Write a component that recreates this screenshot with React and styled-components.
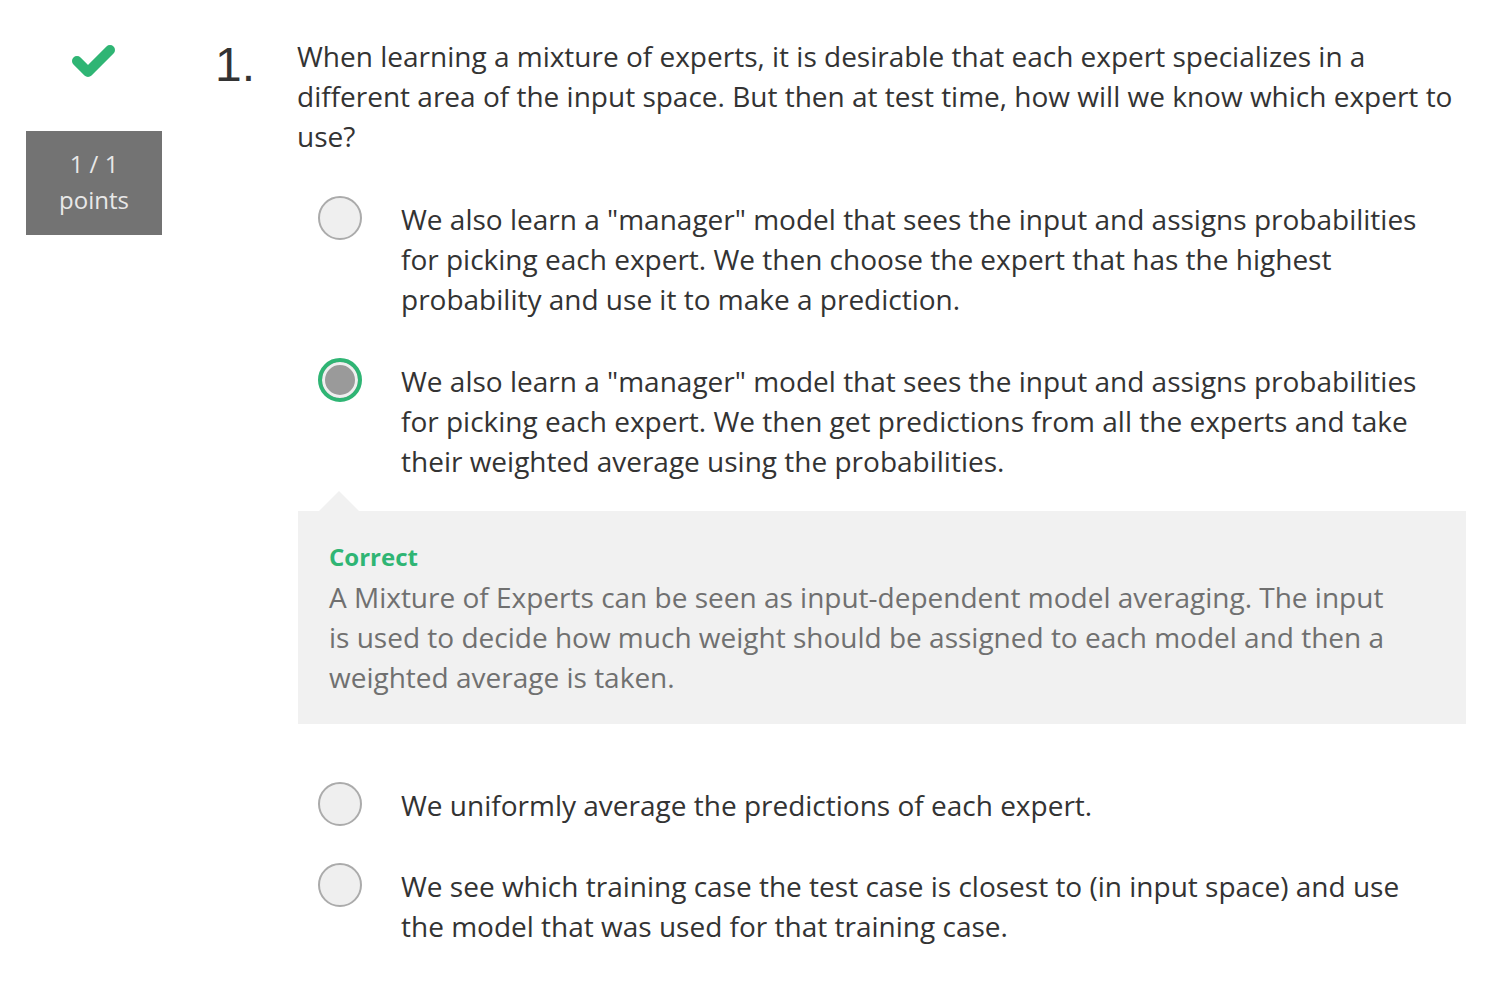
import styled, { createGlobalStyle } from "styled-components"

const GlobalStyle = createGlobalStyle`
  html, body {
    margin: 0;
    padding: 0;
    background: #fff;
  }
  body {
    font-family: "Open Sans", "Noto Sans", sans-serif;
    color: #333;
  }
`

const QuizItem = styled.div`
  display: flex;
  padding-top: 36px;
  width: 1506px;
  box-sizing: border-box;
`

const ScoreCol = styled.div`
  width: 188px;
  padding-left: 26px;
  box-sizing: border-box;
  flex-shrink: 0;
  .check {
    display: block;
    margin: 7px 0 0 45px;
  }
`

const PointsBox = styled.div`
  margin-top: 52px;
  width: 136px;
  height: 104px;
  background: #737373;
  color: #e8e8e8;
  font-size: 24px;
  line-height: 36px;
  text-align: center;
  padding-top: 15px;
  box-sizing: border-box;
`

const Number = styled.div`
  width: 109px;
  flex-shrink: 0;
  padding-left: 27px;
  box-sizing: border-box;
  font-family: "Liberation Sans", Arial, sans-serif;
  font-size: 48px;
  line-height: 56px;
  margin-top: 1px;
  color: #333;
`

const Content = styled.div`
  flex: 1;
  margin-right: 40px;
`

const Prompt = styled.div`
  font-size: 28px;
  line-height: 40px;
  padding-right: 4px;
`

const Options = styled.div`
  margin-top: 43px;
  display: flex;
  flex-direction: column;
`

const OptionRow = styled.div`
  display: flex;
  align-items: flex-start;
  padding-left: 21px;
  margin-top: ${p => p.$gap || 0}px;
`

const Radio = styled.span`
  width: 44px;
  height: 44px;
  flex-shrink: 0;
  margin-top: -3px;
  border-radius: 50%;
  box-sizing: border-box;
  background: ${p => (p.$checked ? "#9a9a9a" : "#efefef")};
  border: ${p => (p.$checked ? "4px solid #2fb574" : "2px solid #ababab")};
  box-shadow: ${p => (p.$checked ? "inset 0 0 0 3px #efefef" : "none")};
`

const OptionText = styled.div`
  margin-left: 39px;
  font-size: 28px;
  line-height: 40px;
  padding-right: 30px;
`

const Feedback = styled.div`
  position: relative;
  margin-top: 30px;
  margin-left: 1px;
  background: #f1f1f1;
  padding: 26px 70px 27px 31px;
  &::before {
    content: "";
    position: absolute;
    top: -20px;
    left: 21px;
    border-left: 20px solid transparent;
    border-right: 20px solid transparent;
    border-bottom: 20px solid #f1f1f1;
  }
`

const FeedbackTitle = styled.div`
  color: #2fb574;
  font-weight: 700;
  font-size: 24px;
  line-height: 40px;
`

const FeedbackText = styled.div`
  color: #707070;
  font-size: 28px;
  line-height: 40px;
`

const CheckIcon = () => (
  <svg className="check" width="46" height="36" viewBox="0 0 46 36">
    <polyline
      points="6,18 17,29 39,7"
      fill="none"
      stroke="#2fb574"
      strokeWidth="10"
      strokeLinecap="round"
      strokeLinejoin="round"
    />
  </svg>
)

const options = [
  {
    text: 'We also learn a "manager" model that sees the input and assigns probabilities for picking each expert. We then choose the expert that has the highest probability and use it to make a prediction.',
  },
  {
    text: 'We also learn a "manager" model that sees the input and assigns probabilities for picking each expert. We then get predictions from all the experts and take their weighted average using the probabilities.',
    checked: true,
  },
  { text: "We uniformly average the predictions of each expert." },
  {
    text: "We see which training case the test case is closest to (in input space) and use the model that was used for that training case.",
  },
]

const gaps = [0, 42, 61, 40]

const App = () => {
  return (
    <>
      <GlobalStyle />
      <QuizItem>
        <ScoreCol>
          <CheckIcon />
          <PointsBox>
            1 / 1
            <br />
            points
          </PointsBox>
        </ScoreCol>
        <Number>1.</Number>
        <Content>
          <Prompt>
            When learning a mixture of experts, it is desirable that each
            expert specializes in a different area of the input space. But then
            at test time, how will we know which expert to use?
          </Prompt>
          <Options>
            {options.map((o, i) => (
              <div key={i}>
                <OptionRow $gap={gaps[i]}>
                  <Radio $checked={o.checked} />
                  <OptionText>{o.text}</OptionText>
                </OptionRow>
                {o.checked && (
                  <Feedback>
                    <FeedbackTitle>Correct</FeedbackTitle>
                    <FeedbackText>
                      A Mixture of Experts can be seen as input-dependent model
                      averaging. The input is used to decide how much weight
                      should be assigned to each model and then a weighted
                      average is taken.
                    </FeedbackText>
                  </Feedback>
                )}
              </div>
            ))}
          </Options>
        </Content>
      </QuizItem>
    </>
  )
}

export default App
